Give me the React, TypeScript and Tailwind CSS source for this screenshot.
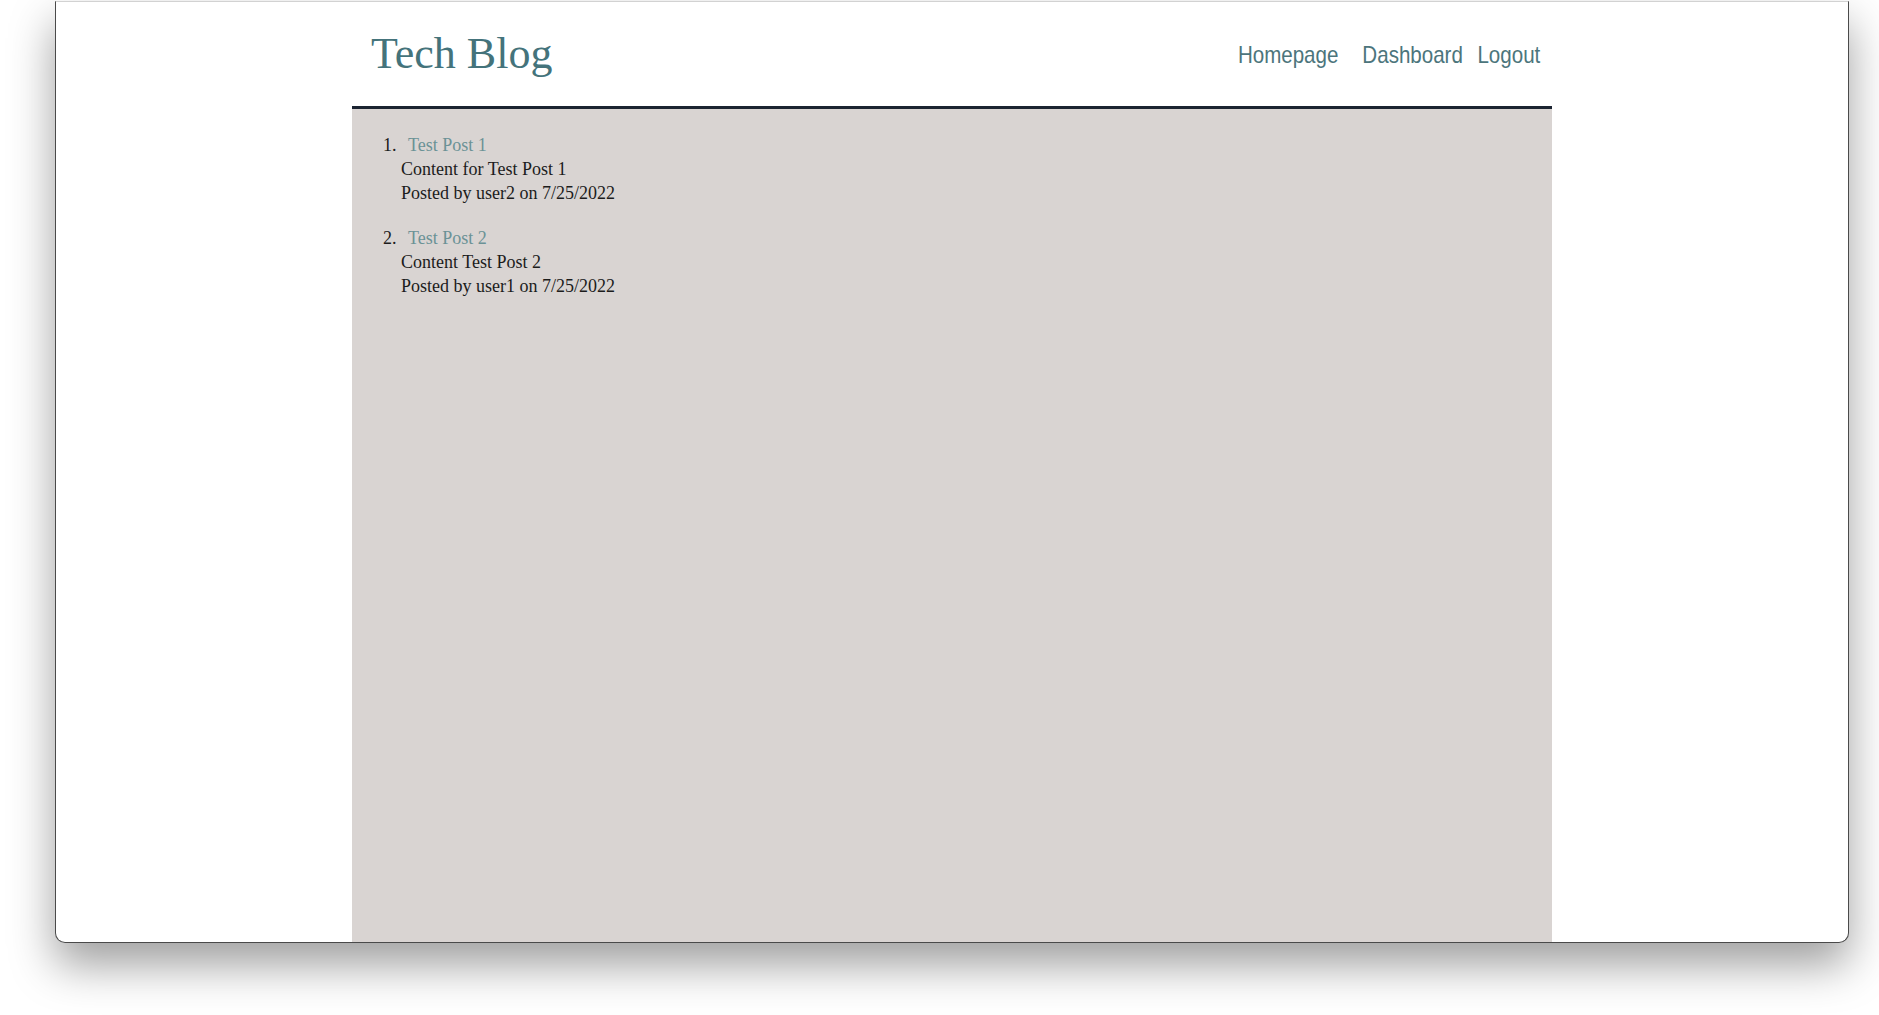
import React from "react";

const posts = [
  { title: "Test Post 1", content: "Content for Test Post 1", user: "user2", date: "7/25/2022" },
  { title: "Test Post 2", content: "Content Test Post 2", user: "user1", date: "7/25/2022" },
];

export default function App() {
  return (
    <div className="w-[1879px] h-[1015px] bg-white overflow-hidden">
      <div className="ml-[55px] w-[1794px] h-[942px] bg-white border-x border-b border-t border-x-[#4a4a4a] border-b-[#4a4a4a] border-t-[#d2d2d2] rounded-b-[10px] overflow-hidden shadow-[0_22px_45px_rgba(0,0,0,0.38)] mt-px flex flex-col">
        <div className="w-[1200px] mx-auto flex flex-col flex-1">
          <header className="h-[104px] flex justify-between border-b-[3px] border-[#1b2431] box-content">
            <h1
              className="pl-[19px] pt-[30px] text-[44px] leading-[44px] text-[#44737b]"
              style={{ fontFamily: '"Liberation Serif", serif' }}
            >
              Tech Blog
            </h1>
            <nav
              className="pr-[14px] pt-[41px] flex text-[24px] leading-[24px] text-[#4c757c] scale-x-[0.856] origin-right"
              style={{ fontFamily: '"Liberation Sans", Arial, sans-serif' }}
            >
              <a className="mr-[28px]">Homepage</a>
              <a className="mr-[17px]">Dashboard</a>
              <a>Logout</a>
            </nav>
          </header>
          <main className="flex-1 bg-[#d9d4d2] pt-[24px]">
            <ol
              className="list-decimal pl-[49px] text-[18px] leading-[24px] text-[#1c1c1c]"
              style={{ fontFamily: '"Liberation Serif", serif' }}
            >
              {posts.map((p) => (
                <li key={p.title} className="mb-[21px] pl-0">
                  <a className="ml-[7px] text-[#6b9296]">{p.title}</a>
                  <div>{p.content}</div>
                  <div>
                    Posted by {p.user} on {p.date}
                  </div>
                </li>
              ))}
            </ol>
          </main>
        </div>
      </div>
    </div>
  );
}
